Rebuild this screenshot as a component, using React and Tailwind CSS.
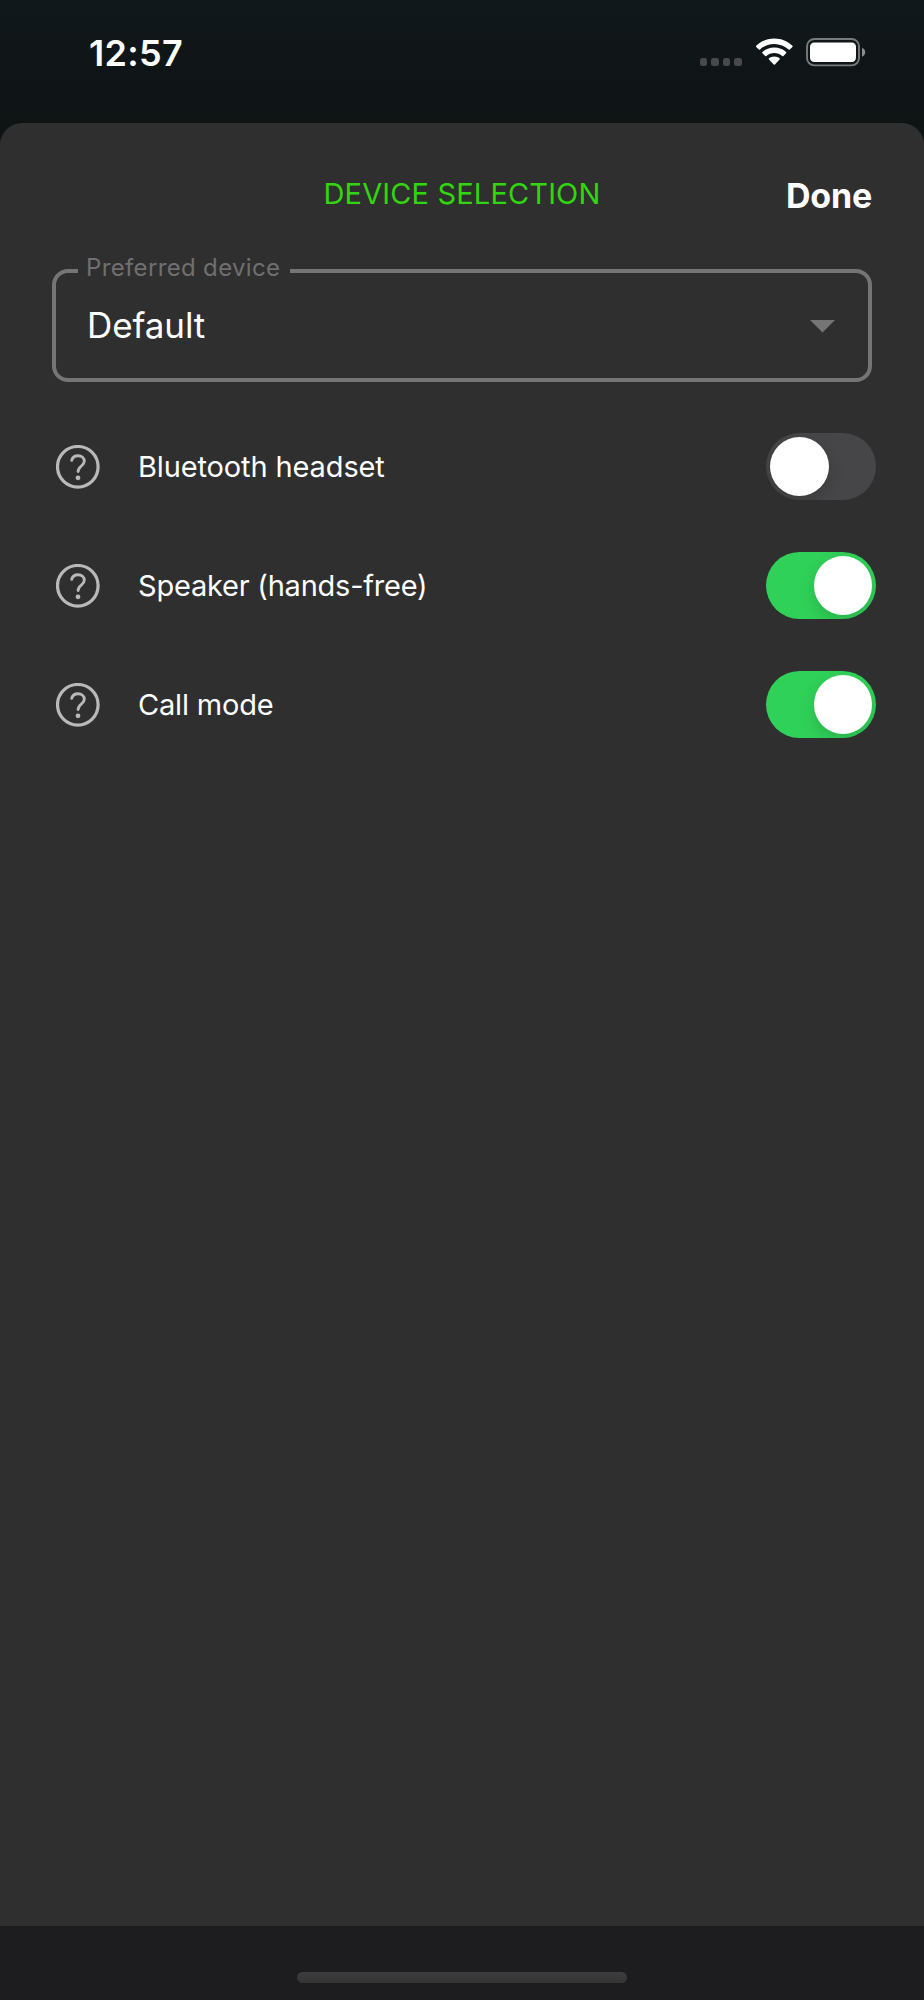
import React, { useState } from "react";

const options = [
  { id: "bluetooth", label: "Bluetooth headset", tracking: "tracking-[-0.13px]", on: false },
  { id: "speaker", label: "Speaker (hands-free)", tracking: "tracking-[-0.22px]", on: true },
  { id: "callMode", label: "Call mode", tracking: "tracking-[-0.18px]", on: true },
];

const WifiIcon = () => (
  <svg width="37" height="28" viewBox="0 0 37 28" fill="#fff">
    <path d="M18.3 0.4C25.4 0.4 31.8 3.2 36.4 7.7C36.8 8.1 36.8 8.5 36.4 8.9L33.8 11.5C33.4 11.9 33 11.9 32.6 11.5C28.8 8 23.8 5.9 18.3 5.9S7.8 8 4 11.5C3.6 11.9 3.2 11.9 2.8 11.5L0.2 8.9C-0.2 8.5 -0.2 8.1 0.2 7.7C4.8 3.2 11.2 0.4 18.3 0.4Z" />
    <path d="M18.3 9.5C22.9 9.5 27 11.2 30.1 14C30.5 14.4 30.5 14.8 30.1 15.2L27.4 17.9C27 18.3 26.6 18.3 26.2 17.9C24.1 16 21.3 14.9 18.3 14.9S12.5 16 10.4 17.9C10 18.3 9.6 18.3 9.2 17.9L6.5 15.2C6.1 14.8 6.1 14.4 6.5 14C9.6 11.2 13.7 9.5 18.3 9.5Z" />
    <path d="M18.3 18.4C20.3 18.4 22.2 19.1 23.6 20.3C24 20.7 24 21.1 23.6 21.5L18.9 26.4C18.5 26.8 18.1 26.8 17.7 26.4L13 21.5C12.6 21.1 12.6 20.7 13 20.3C14.4 19.1 16.3 18.4 18.3 18.4Z" />
  </svg>
);

const BatteryIcon = () => (
  <svg width="60" height="29" viewBox="0 0 60 29">
    <rect x="1" y="1" width="52" height="26.4" rx="7.5" fill="none" stroke="#787b7d" strokeWidth="1.9" />
    <rect x="4" y="4.4" width="46" height="19.6" rx="4.2" fill="#fff" />
    <path d="M56 9.8C58 10.5 59.2 12.3 59.2 14.3S58 18.1 56 18.8Z" fill="#8a8c8d" />
  </svg>
);

const HelpIcon = () => (
  <svg width="44" height="44" viewBox="0 0 44 44" fill="none">
    <circle cx="21.8" cy="21.8" r="20.3" stroke="#b9b9b9" strokeWidth="3.2" />
    <path
      d="M15.7 15.4C16.4 12.3 18.8 10.7 22 10.7C25.7 10.7 28.3 13 28.3 16.3C28.3 21 22.1 21.1 22.1 26.6"
      stroke="#b9b9b9"
      strokeWidth="2.9"
      strokeLinecap="round"
    />
    <circle cx="22" cy="32.8" r="2.4" fill="#b9b9b9" />
  </svg>
);

const Toggle = ({ on, label, onChange }) => (
  <button
    type="button"
    role="switch"
    aria-checked={on}
    aria-label={label}
    onClick={onChange}
    className={`flex h-[67px] w-[110px] items-center overflow-hidden rounded-full px-1 ${
      on ? "justify-end bg-[#30d158]" : "justify-start bg-[#464648]"
    }`}
  >
    <span className="size-[58.5px] rounded-full bg-white shadow-[0_6px_16px_rgba(0,0,0,0.15)]" />
  </button>
);

const App = () => {
  const [rows, setRows] = useState(options);

  const toggleRow = (id) => {
    setRows(rows.map((row) => (row.id === id ? { ...row, on: !row.on } : row)));
  };

  return (
    <div className="flex h-[2000px] w-[924px] flex-col bg-[#1d1d1f] font-['Inter',sans-serif] text-white">
      <div className="flex h-[1926px] flex-col bg-linear-to-b from-[#11181b] from-0% to-[#0e1314] to-[123px]">
        {/* Status bar */}
        <div className="flex h-[123px] shrink-0 items-start justify-between pr-[58px] pl-[89px]">
          <span className="mt-[31px] text-[36px] leading-[44px] font-semibold tracking-[0.3px]">12:57</span>
          <div className="mt-[38px] flex items-start">
            <div className="mt-5 mr-[14px] flex gap-1">
              <span className="size-[7.6px] rounded-[2.5px] bg-[#47494a]" />
              <span className="size-[7.6px] rounded-[2.5px] bg-[#47494a]" />
              <span className="size-[7.6px] rounded-[2.5px] bg-[#47494a]" />
              <span className="size-[7.6px] rounded-[2.5px] bg-[#47494a]" />
            </div>
            <WifiIcon />
            <div className="ml-[13px]">
              <BatteryIcon />
            </div>
          </div>
        </div>

        {/* Sheet */}
        <div className="flex-1 rounded-t-[22px] bg-[#2f2f2f] px-[52px]">
          <div className="grid h-[134px] grid-cols-[1fr_auto_1fr] items-start">
            <h1 className="col-start-2 mt-[53px] text-[29px] leading-9 font-normal tracking-[0.15px] text-[#32d60f]">
              DEVICE SELECTION
            </h1>
            <button
              type="button"
              className="mt-[53px] justify-self-end text-[34px] leading-10 font-bold tracking-[-0.2px]"
            >
              Done
            </button>
          </div>

          {/* Device select */}
          <fieldset className="h-[125px] rounded-2xl border-4 border-[#757575] pl-[22px]">
            <legend className="h-[27px] w-[212px] pl-2 text-[24px] leading-[22px] tracking-[0.35px] whitespace-nowrap text-[#6f6f6f]">
              Preferred device
            </legend>
            <div className="flex items-start justify-between pr-[33px] pl-[9px]">
              <span className="mt-[17px] text-[35px] leading-[48px] tracking-[-0.1px]">Default</span>
              <svg width="25" height="13" viewBox="0 0 25 13" fill="#757575" className="mt-9">
                <path d="M0 0H25L12.5 12.5Z" />
              </svg>
            </div>
          </fieldset>

          <div className="mt-[51px] -mr-1 ml-1 flex flex-col gap-[52px]">
            {rows.map((row) => (
              <div key={row.id} className="flex h-[67px] items-center">
                <HelpIcon />
                <span className={`mt-px ml-[38px] flex-1 text-[29px] leading-9 ${row.tracking}`}>
                  {row.label}
                </span>
                <Toggle on={row.on} label={row.label} onChange={() => toggleRow(row.id)} />
              </div>
            ))}
          </div>
        </div>
      </div>

      {/* Home indicator */}
      <div className="flex flex-1 justify-center pt-[46px]">
        <div className="h-[11px] w-[330px] rounded-full bg-linear-to-b from-[#3d3d3d] to-[#343434]" />
      </div>
    </div>
  );
};

export default App;
